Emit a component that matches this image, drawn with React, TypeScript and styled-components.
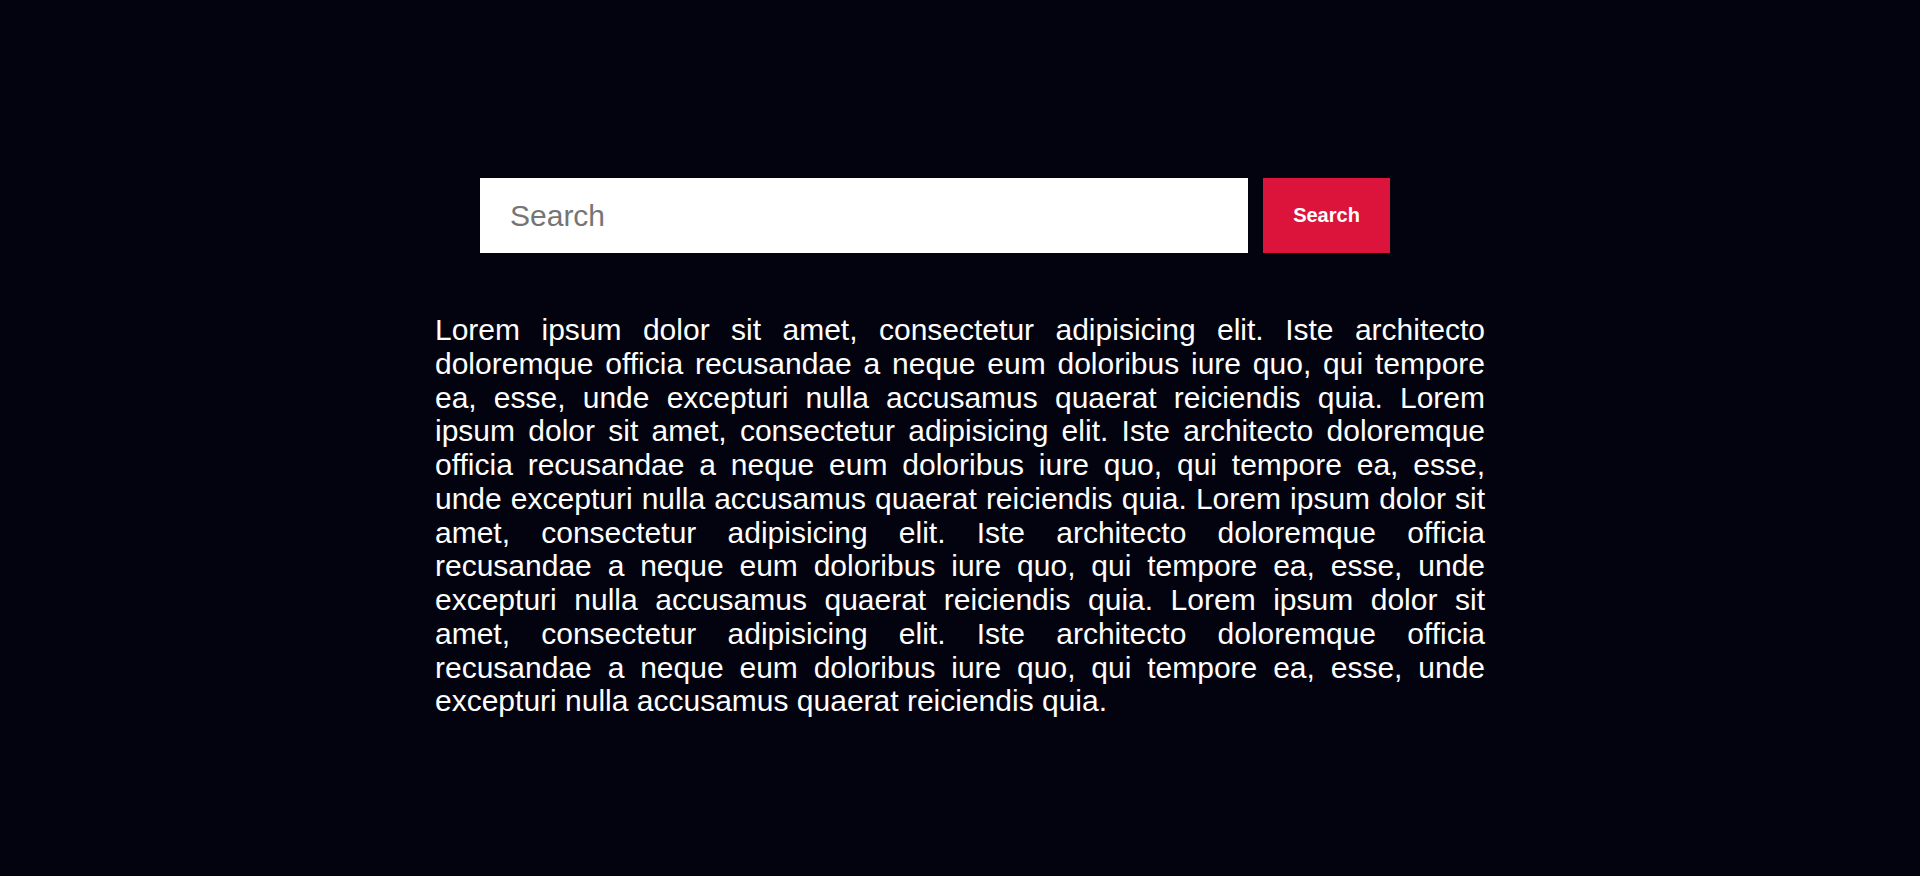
import React from "react";
import styled, { createGlobalStyle } from "styled-components";

const GlobalStyle = createGlobalStyle`
  html, body {
    margin: 0;
    padding: 0;
    background: #03030f;
  }
  body {
    font-family: "Liberation Sans", Arial, sans-serif;
  }
`;

const Page = styled.main`
  min-height: 876px;
  background: #03030f;
  display: flex;
  flex-direction: column;
  align-items: center;
  padding-top: 178px;
  box-sizing: border-box;
`;

const SearchForm = styled.form`
  width: 960px;
  display: flex;
  gap: 15px;
  margin: 0;
`;

const SearchInput = styled.input`
  width: 768px;
  height: 75px;
  box-sizing: border-box;
  border: none;
  outline: none;
  background: #ffffff;
  padding: 0 30px;
  font-family: "Liberation Sans", Arial, sans-serif;
  font-size: 30px;
  color: #222;
  &::placeholder {
    color: #757575;
  }
`;

const SearchButton = styled.button`
  width: 127px;
  height: 75px;
  border: none;
  background: #dc143c;
  color: #ffffff;
  font-family: "Liberation Sans", Arial, sans-serif;
  font-weight: 700;
  font-size: 20px;
  cursor: pointer;
  padding: 0;
`;

const Paragraph = styled.p`
  width: 1050px;
  margin: 60px 0 0;
  color: #ffffff;
  font-family: "Liberation Sans", Arial, sans-serif;
  font-size: 30px;
  line-height: 33.75px;
  text-align: justify;
`;

const lorem =
  "Lorem ipsum dolor sit amet, consectetur adipisicing elit. Iste architecto doloremque officia recusandae a neque eum doloribus iure quo, qui tempore ea, esse, unde excepturi nulla accusamus quaerat reiciendis quia.";

export default function App() {
  return (
    <>
      <GlobalStyle />
      <Page>
        <SearchForm onSubmit={(e) => e.preventDefault()}>
          <SearchInput type="text" placeholder="Search" />
          <SearchButton type="submit">Search</SearchButton>
        </SearchForm>
        <Paragraph>{[lorem, lorem, lorem, lorem].join(" ")}</Paragraph>
      </Page>
    </>
  );
}
